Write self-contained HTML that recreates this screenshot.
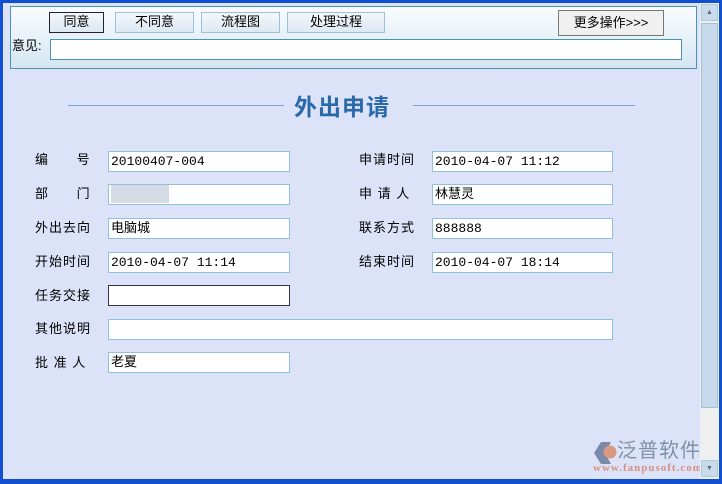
<!DOCTYPE html><html><head><meta charset="utf-8"><style>
*{margin:0;padding:0;box-sizing:border-box}
html,body{width:722px;height:484px}
body{background:#0f4fd0;position:relative;overflow:hidden;font-family:"Liberation Sans","Noto Sans CJK SC",sans-serif;font-size:13px;color:#000;line-height:1.2}
.main{position:absolute;left:3px;top:3px;width:697px;height:476px;background:#dce3f8}
.sb{position:absolute;left:700px;top:3px;width:19px;height:476px;background:#eef0f0}
.sb .a{position:absolute;left:1px;width:17px;height:17px;background:#c8dbea;border:1px solid #b0c8dc;font-size:7px;color:#667;text-align:center;line-height:15px}
.sb .t{position:absolute;left:1px;top:20px;width:17px;height:385px;background:#c6d9ea;border:1px solid #a8c0d8}
.panel{position:absolute;left:7px;top:3px;width:687px;height:63px;border:1px solid #4a94b0;background:linear-gradient(#fafcfe,#d4e6f2)}
.btn{position:absolute;top:5px;height:21px;border:1px solid #9cc0d8;background:linear-gradient(#f4f8fb,#dce8f2);text-align:center;line-height:18px;font-size:13px}
.ipt{position:absolute;background:#fff;border:1px solid #8fc0dc;height:21px;font-family:"Liberation Mono","Noto Sans CJK SC",monospace;font-size:13px;line-height:19px;padding-left:2px}
.lb{position:absolute;font-size:13px;letter-spacing:1px;line-height:14px}
</style></head><body>
<div class="main">
<div class="panel">
<div class="btn" style="left:38px;width:55px;border:1px solid #223;">同意</div>
<div class="btn" style="left:104px;width:79px">不同意</div>
<div class="btn" style="left:190px;width:79px">流程图</div>
<div class="btn" style="left:276px;width:98px">处理过程</div>
<div class="btn" style="left:547px;top:3px;width:106px;height:26px;line-height:23px;border:1px solid #777;background:#f0f0f0">更多操作&gt;&gt;&gt;</div>
<div style="position:absolute;left:1px;top:32px;line-height:14px">意见:</div>
<div class="ipt" style="left:39px;top:32px;width:632px;border-color:#4a94b0"></div>
</div>
<div style="position:absolute;left:65px;top:102px;width:216px;height:1px;background:#7aa8c8"></div>
<div style="position:absolute;left:410px;top:102px;width:222px;height:1px;background:#7aa8c8"></div>
<div style="position:absolute;left:291px;top:88px;font-size:23px;line-height:28px;font-weight:bold;color:#2a6aa8;letter-spacing:1px;font-family:'Noto Sans CJK SC',sans-serif">外出申请</div>
<div class="lb" style="left:32px;top:150px">编&nbsp;&nbsp;&nbsp;&nbsp;&nbsp;&nbsp;号</div>
<div class="ipt" style="left:105px;top:148px;width:182px">20100407-004</div>
<div class="lb" style="left:32px;top:184px">部&nbsp;&nbsp;&nbsp;&nbsp;&nbsp;&nbsp;门</div>
<div class="ipt" style="left:105px;top:181px;width:182px"><div style="width:58px;height:18px;background:#d6dce6"></div></div>
<div class="lb" style="left:32px;top:218px">外出去向</div>
<div class="ipt" style="left:105px;top:215px;width:182px">电脑城</div>
<div class="lb" style="left:32px;top:252px">开始时间</div>
<div class="ipt" style="left:105px;top:249px;width:182px">2010-04-07 11:14</div>
<div class="lb" style="left:32px;top:286px">任务交接</div>
<div class="ipt" style="left:105px;top:282px;width:182px;border-color:#334"></div>
<div class="lb" style="left:32px;top:319px">其他说明</div>
<div class="ipt" style="left:105px;top:316px;width:505px"></div>
<div class="lb" style="left:32px;top:353px">批&nbsp;准&nbsp;人</div>
<div class="ipt" style="left:105px;top:349px;width:182px">老夏</div>
<div class="lb" style="left:356px;top:150px">申请时间</div>
<div class="ipt" style="left:429px;top:148px;width:181px">2010-04-07 11:12</div>
<div class="lb" style="left:356px;top:184px">申&nbsp;请&nbsp;人</div>
<div class="ipt" style="left:429px;top:181px;width:181px">林慧灵</div>
<div class="lb" style="left:356px;top:218px">联系方式</div>
<div class="ipt" style="left:429px;top:215px;width:181px">888888</div>
<div class="lb" style="left:356px;top:252px">结束时间</div>
<div class="ipt" style="left:429px;top:249px;width:181px">2010-04-07 18:14</div>
<svg style="position:absolute;left:589px;top:437px" width="28" height="26"><path d="M2 13 L9 2 L19 2 L13 13 L19 24 L9 24Z" fill="#7a8aa8"/><circle cx="18" cy="12" r="6.5" fill="#d99880"/></svg>
<div style="position:absolute;left:614px;top:436px;font-size:20px;line-height:24px;color:#8090a8;letter-spacing:1px;white-space:nowrap">泛普软件</div>
<div style="position:absolute;left:590px;top:459px;font-size:11px;line-height:12px;color:#d89080;font-family:'Liberation Serif',serif;font-weight:bold;letter-spacing:1px;white-space:nowrap">www.fanpusoft.com</div>
</div>
<div class="sb"><div class="a" style="top:1px">▲</div><div class="t"></div><div class="a" style="top:457px">▼</div></div>
</body></html>
